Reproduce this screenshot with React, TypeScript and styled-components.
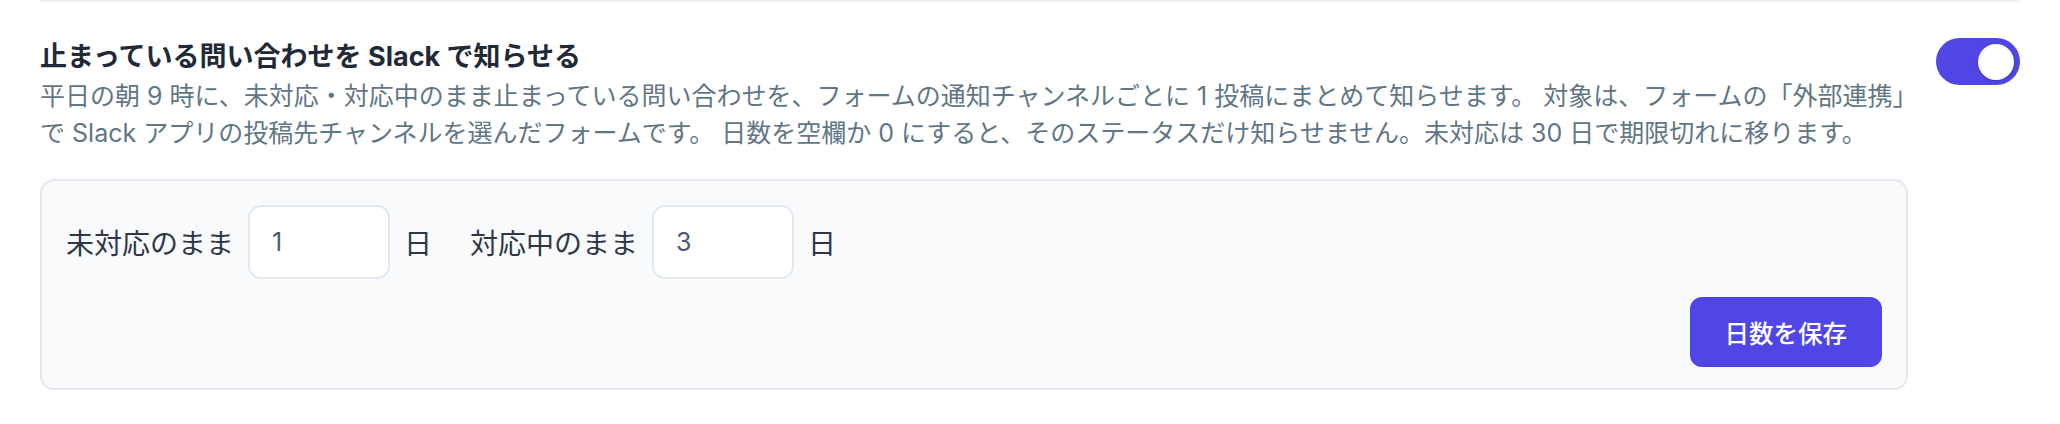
import React from "react";
import styled, { createGlobalStyle } from "styled-components";

const GlobalStyle = createGlobalStyle`
  html, body {
    margin: 0;
    padding: 0;
    background: #ffffff;
  }
  body {
    font-family: Inter, "Noto Sans CJK JP", "Noto Sans", sans-serif;
    -webkit-font-smoothing: antialiased;
  }
  * { box-sizing: border-box; }
`;

const Page = styled.div`
  padding: 0 40px;
`;

const Section = styled.section`
  border-top: 2px solid #edf0f4;
  padding-top: 36px;
  display: flex;
  align-items: flex-start;
  gap: 20px;
`;

const Main = styled.div`
  flex: 1;
  min-width: 0;
`;

const Title = styled.h3`
  margin: 0;
  font-size: 27px;
  line-height: 38px;
  font-weight: 700;
  color: #1f2937;
`;

const Description = styled.p`
  margin: 2px 0 0;
  font-size: 25px;
  line-height: 37px;
  font-weight: 400;
  color: #5f7686;
`;

const Panel = styled.div`
  margin: 27px 8px 0 0;
  background: #f8fafc;
  border: 2px solid #e5e9ef;
  border-radius: 14px;
  padding: 24px 24px 21px;
  display: flex;
  flex-direction: column;
  gap: 18px;
`;

const FieldRow = styled.div`
  display: flex;
  align-items: center;
  gap: 38px;
`;

const Field = styled.label`
  display: flex;
  align-items: center;
  gap: 14px;
  font-size: 28px;
  color: #2d3748;
`;

const NumberInput = styled.input`
  width: 142px;
  height: 74px;
  border: 2px solid #e2e8f0;
  border-radius: 13px;
  background: #ffffff;
  padding: 0 22px;
  font-family: Inter, "Noto Sans CJK JP", sans-serif;
  font-size: 25px;
  color: #4a5a6e;
  outline: none;
`;

const Actions = styled.div`
  display: flex;
  justify-content: flex-end;
`;

const SaveButton = styled.button`
  height: 70px;
  padding: 0 35px;
  border: none;
  border-radius: 12px;
  background: #4f46e5;
  color: #ffffff;
  font-family: Inter, "Noto Sans CJK JP", sans-serif;
  font-size: 24.5px;
  font-weight: 500;
  cursor: pointer;
`;

const Toggle = styled.button<{ $on: boolean }>`
  flex: none;
  width: 84px;
  height: 47px;
  border: none;
  border-radius: 999px;
  background: ${(p) => (p.$on ? "#4f46e5" : "#cbd5e1")};
  padding: 0 6px;
  display: flex;
  align-items: center;
  justify-content: ${(p) => (p.$on ? "flex-end" : "flex-start")};
  cursor: pointer;
`;

const Knob = styled.span`
  width: 36px;
  height: 36px;
  border-radius: 50%;
  background: #ffffff;
  box-shadow: 0 1px 3px rgba(15, 23, 42, 0.25);
`;

export default function App() {
  const [on, setOn] = React.useState(true);
  const [open, setOpen] = React.useState("1");
  const [doing, setDoing] = React.useState("3");

  return (
    <>
      <GlobalStyle />
      <Page>
        <Section>
          <Main>
            <Title>止まっている問い合わせを Slack で知らせる</Title>
            <Description>
              平日の朝 9 時に、未対応・対応中のまま止まっている問い合わせを、フォームの通知チャンネルごとに 1 投稿にまとめて知らせます。 対象は、フォームの「外部連携」で Slack アプリの投稿先チャンネルを選んだフォームです。 日数を空欄か 0 にすると、そのステータスだけ知らせません。未対応は 30 日で期限切れに移ります。
            </Description>
            <Panel>
              <FieldRow>
                <Field>
                  未対応のまま
                  <NumberInput
                    type="text"
                    inputMode="numeric"
                    value={open}
                    onChange={(e) => setOpen(e.target.value)}
                  />
                  日
                </Field>
                <Field>
                  対応中のまま
                  <NumberInput
                    type="text"
                    inputMode="numeric"
                    value={doing}
                    onChange={(e) => setDoing(e.target.value)}
                  />
                  日
                </Field>
              </FieldRow>
              <Actions>
                <SaveButton type="button">日数を保存</SaveButton>
              </Actions>
            </Panel>
          </Main>
          <Toggle
            type="button"
            role="switch"
            aria-checked={on}
            $on={on}
            onClick={() => setOn(!on)}
          >
            <Knob />
          </Toggle>
        </Section>
      </Page>
    </>
  );
}
